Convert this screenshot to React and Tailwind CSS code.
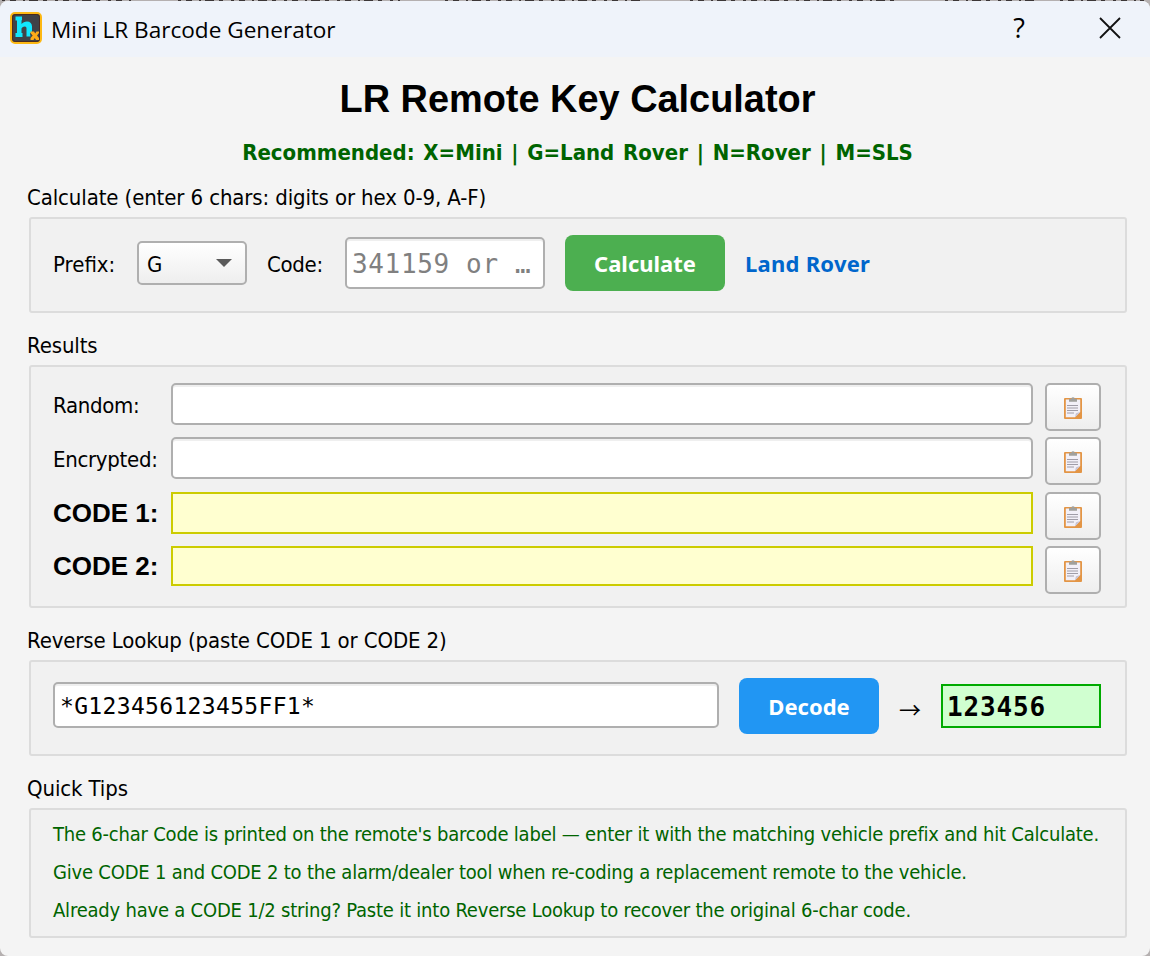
const TIPS = [
  "The 6-char Code is printed on the remote's barcode label — enter it with the matching vehicle prefix and hit Calculate.",
  'Give CODE 1 and CODE 2 to the alarm/dealer tool when re-coding a replacement remote to the vehicle.',
  'Already have a CODE 1/2 string? Paste it into Reverse Lookup to recover the original 6-char code.',
]

function AppIcon() {
  return (
    <svg width="32" height="32" viewBox="0 0 32 32" className="shrink-0">
      <rect x="1" y="1" width="30" height="30" rx="4" fill="#404247" stroke="#fdb813" strokeWidth="2" />
      <rect x="2.500" y="2.500" width="27" height="27" rx="3" fill="none" stroke="#4a2a20" />
      <path
        d="M5.500 4.500H12V8l-.5.500v3.500C13 10.500 14.500 9.500 17 9.500c3.200 0 5 2 5 5v5l-2 2 .5 3h-4v-8c0-1.300-.5-2-1.700-2-1.500 0-2.600.7-3.300 2v4.500h1V25h-7v-4h1.500V8.500h-1.500z"
        fill="#12e6fd"
      />
      <path d="M20.500 19.500H24l1.200 2 1.300-2h2.500v1.500l-2 2.500 2 2.500v2h-3l-1.200-2-1.300 2h-3v-2l2.200-2.500-2.200-2.500z" fill="#fdab17" />
    </svg>
  )
}

function ClipboardIcon() {
  return (
    <svg width="18" height="22" viewBox="0 0 18 22">
      <rect y="1" width="18" height="21" rx="1" fill="#e39545" />
      <path d="M1.800 2.500h14.400V15L11 20.300H1.800z" fill="#f2f0f8" />
      <path d="M10.800 20.500l1.200-4.300 4.300-1.200z" fill="#c9c4d4" />
      <path d="M5 1.800h2.500V.8h1V0h1v.8h1v1H13v3H5z" fill="#a0a09c" />
      <path d="M3 8.500h11M3 11h11M3 13.500h11M3 16h7" stroke="#96939e" strokeWidth="0.900" />
    </svg>
  )
}

function Group({ title, className, children }) {
  return (
    <section className="mt-[14px]">
      <h2 className="h-[38px] leading-[38px] -ml-0.5 text-[22px] tracking-[-0.120px] whitespace-nowrap">{title}</h2>
      <div className={`border-2 border-[#dcdcdc] rounded-[3px] bg-[#f1f1f1] pl-[22px] pr-6 ${className}`}>{children}</div>
    </section>
  )
}

function CopyButton() {
  return (
    <button className="w-14 h-12 shrink-0 flex items-center justify-center pt-0.5 border-2 border-[#afafaf] rounded-[5px] bg-linear-to-b from-white to-[#eeeeee]">
      <ClipboardIcon />
    </button>
  )
}

function ResultRow({ label, labelClass, className, fieldClass }) {
  return (
    <div className={`flex items-start ${className}`}>
      <span className={`w-[118px] shrink-0 whitespace-nowrap ${labelClass}`}>{label}</span>
      <div className={`flex-1 mr-3 border-2 ${fieldClass}`} />
      <CopyButton />
    </div>
  )
}

const plainLabel = 'leading-[46px] text-[22px] tracking-[-0.3px]'
const codeLabel = "font-['Liberation_Sans',sans-serif] font-bold text-[26px]"
const plainField = 'h-[42px] bg-white border-[#afafaf] rounded-[5px] shadow-[inset_0_2px_0_#efefef]'
const codeField = 'bg-[#ffffd0] border-[#cccc00]'

export default function App() {
  return (
    <div className="w-[1150px] h-[956px] overflow-hidden bg-[#b5b0b0] text-black font-['DejaVu_Sans_Condensed','DejaVu_Sans',sans-serif]">
      {/* edge of whatever sits behind the dialog */}
      <svg width="1150" height="1" className="block">
        <path
          d="M2 .5h130M178 .5h222M445 .5h195M690 .5h205M945 .5h90M1060 .5h84"
          stroke="#3c3636"
          strokeDasharray="3 5 6 7 2 4 9 5 4 8"
        />
      </svg>
      <div className="h-[955px] rounded-lg overflow-hidden bg-[#f4f4f4]">
        <header className="h-14 bg-[#eff3fa] flex items-center pl-[10px] pr-[29px]">
          <div className="pb-0.5">
            <AppIcon />
          </div>
          <span className="ml-[9px] font-['Open_Sans',sans-serif] text-[22.600px] pt-0.5 whitespace-nowrap">
            Mini LR Barcode Generator
          </span>
          <span className="ml-auto mr-[74px] pb-[4px] font-['Open_Sans',sans-serif] text-[27px] leading-none">?</span>
          <svg width="22" height="22" viewBox="0 0 22 22" className="mb-0.5">
            <path d="M1 1l20 20M21 1L1 21" stroke="#111" strokeWidth="1.800" />
          </svg>
        </header>

        <main className="pl-[29px] pr-[23px]">
          <h1 className="h-[84px] leading-[84px] -ml-px text-center font-['Liberation_Sans',sans-serif] font-bold text-[37.900px]">
            LR Remote Key Calculator
          </h1>
          <p className="h-6 leading-6 -ml-px text-center font-bold text-[22px] [word-spacing:1.850px] text-[#006400] whitespace-nowrap">
            Recommended: X=Mini | G=Land Rover | N=Rover | M=SLS
          </p>

          <Group title="Calculate (enter 6 chars: digits or hex 0-9, A-F)" className="h-24 pt-4">
            <div className="h-14 flex items-center text-[22px] whitespace-nowrap">
              <span className="w-[84px] pt-0.5">Prefix:</span>
              <div className="w-[110px] h-11 flex items-center justify-between pl-2 pr-[13px] border-2 border-[#afafaf] rounded-[5px] bg-linear-to-b from-white to-[#eeeeee]">
                <span className="pt-0.5">G</span>
                <svg width="16" height="8" viewBox="0 0 16 8">
                  <path d="M0 0h16L8 8z" fill="#5a5a5a" />
                </svg>
              </div>
              <span className="ml-5 w-[78px] pt-0.5 tracking-[-0.3px]">Code:</span>
              <div className="w-[200px] h-[52px] leading-[50px] pl-[5px] border-2 border-[#afafaf] rounded-[5px] bg-white shadow-[inset_0_2px_0_#efefef] text-[#808080] font-['DejaVu_Sans_Mono',monospace] text-[26px] tracking-[0.650px]">
                341159 or …
              </div>
              <button className="ml-5 w-40 h-14 rounded-lg bg-[#4caf50] text-white font-['Noto_Sans',sans-serif] font-bold text-[22px]">
                Calculate
              </button>
              <span className="ml-5 text-[#0066cc] font-['Noto_Sans',sans-serif] font-bold text-[22px] tracking-[0.250px]">Land Rover</span>
            </div>
          </Group>

          <Group title="Results" className="h-[243px] pt-4">
            <ResultRow label="Random:" labelClass={plainLabel} className="h-[54px]" fieldClass={plainField} />
            <ResultRow label="Encrypted:" labelClass={plainLabel} className="h-[55px]" fieldClass={plainField} />
            <ResultRow label="CODE 1:" labelClass={`leading-[42px] ${codeLabel}`} className="h-[54px]" fieldClass={`h-[42px] ${codeField}`} />
            <ResultRow label="CODE 2:" labelClass={`leading-10 ${codeLabel}`} className="h-12" fieldClass={`h-10 ${codeField}`} />
          </Group>

          <Group title="Reverse Lookup (paste CODE 1 or CODE 2)" className="h-24 pt-4">
            <div className="h-14 flex items-center whitespace-nowrap">
              <div className="w-[666px] h-[46px] mb-0.5 leading-[44px] pl-[5px] border-2 border-[#afafaf] rounded-[5px] bg-white shadow-[inset_0_2px_0_#efefef] font-['DejaVu_Sans_Mono',monospace] text-[23px] tracking-[0.330px]">
                *G123456123455FF1*
              </div>
              <button className="ml-5 w-[140px] h-14 rounded-lg bg-[#2196f3] text-white font-['Noto_Sans',sans-serif] font-bold text-[22px]">
                Decode
              </button>
              <span className="w-[62px] pt-1 text-center font-['Noto_Sans_CJK_JP',sans-serif] text-[22px] leading-none">→</span>
              <div className="w-40 h-11 leading-[42px] pl-1 border-2 border-[#00aa00] bg-[#d0ffd0] font-['DejaVu_Sans_Mono',monospace] font-bold text-[26px] tracking-[0.850px]">
                123456
              </div>
            </div>
          </Group>

          <Group title="Quick Tips" className="h-[130px] pt-[5px]">
            {TIPS.map((tip) => (
              <p key={tip} className="h-[38px] leading-[38px] text-[20px] tracking-[-0.210px] text-[#006400] whitespace-nowrap">
                {tip}
              </p>
            ))}
          </Group>
        </main>
      </div>
    </div>
  )
}
